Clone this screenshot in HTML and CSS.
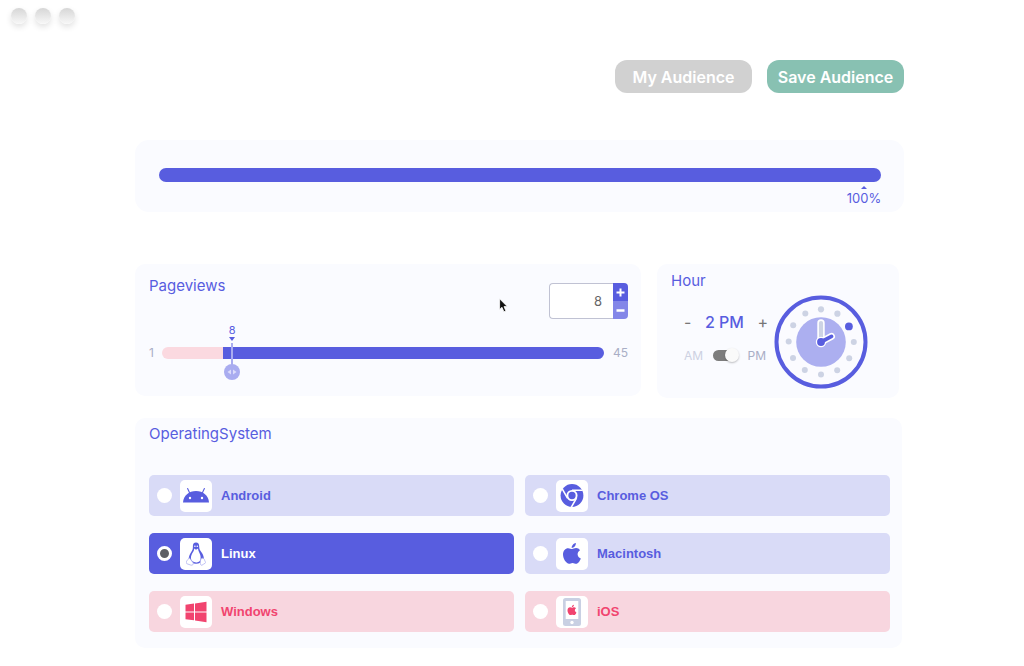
FILE: index.html
```html
<!DOCTYPE html>
<html lang="en">
<head>
    <meta charset="UTF-8">
    <meta name="viewport" content="width=device-width, initial-scale=1.0">
    <title>Audience</title>
    <link rel="stylesheet" href="styles.css">
</head>
<body>
    <div class="window-dots">
        <span></span>
        <span></span>
        <span></span>
    </div>

    <main class="page">
        <div class="actions">
            <button class="btn btn-grey" type="button">My Audience</button>
            <button class="btn btn-green" type="button">Save Audience</button>
        </div>

        <section class="card total">
            <div class="total-bar"></div>
            <div class="total-value">
                <span class="caret-up"></span>
                100%
            </div>
        </section>

        <div class="row">
            <section class="card pageviews">
                <div class="pageviews-head">
                    <h2>Pageviews</h2>
                    <div class="stepper">
                        <input type="text" id="views" value="8" aria-label="Pageviews">
                        <div class="stepper-buttons">
                            <button type="button" onclick="changeViews(1)" aria-label="More">
                                <svg width="9" height="9" viewBox="0 0 9 9"><path d="M4.5 0.5v8M0.5 4.5h8" stroke="#fff" stroke-width="2"/></svg>
                            </button>
                            <button type="button" class="minus" onclick="changeViews(-1)" aria-label="Less">
                                <svg width="9" height="9" viewBox="0 0 9 9"><path d="M0.5 4.5h8" stroke="#fff" stroke-width="2.4"/></svg>
                            </button>
                        </div>
                    </div>
                </div>
                <div class="slider">
                    <span class="limit">1</span>
                    <div class="track">
                        <div class="track-off" id="trackOff" style="width: 13.8%"></div>
                        <div class="track-on"></div>
                        <input type="range" id="range" min="1" max="45" value="8" aria-label="Pageviews range">
                        <div class="marker" id="marker" style="left: 15.9%">
                            <span class="marker-value" id="markerValue">8</span>
                            <span class="caret-down"></span>
                            <span class="marker-line"></span>
                            <svg width="10" height="6" viewBox="0 0 10 6"><path d="M4 0.5v5L0.5 3zM6 0.5v5L9.5 3z" fill="#dcdcfb"/></svg>
                        </div>
                    </div>
                    <span class="limit limit-max">45</span>
                </div>
            </section>

            <section class="card hour">
                <h2>Hour</h2>
                <div class="hour-value">
                    <button type="button" aria-label="Earlier">-</button>
                    <span>2 PM</span>
                    <button type="button" aria-label="Later">+</button>
                </div>
                <div class="ampm">
                    <label class="am" for="ampm">AM</label>
                    <input type="checkbox" id="ampm" checked>
                    <label for="ampm">PM</label>
                </div>
                <svg class="clock" viewBox="0 0 94 94">
                    <circle cx="47" cy="47" r="44.5" fill="#fbfbff" stroke="#585ddf" stroke-width="4"/>
                    <circle cx="47" cy="47" r="24.8" fill="#acaff0"/>
                    <g fill="#cdd3e4">
                        <circle cx="47" cy="14.3" r="3.1"/>
                        <circle cx="63.4" cy="18.7" r="3.1"/>
                        <circle cx="79.8" cy="47" r="3"/>
                        <circle cx="75.2" cy="63.2" r="3"/>
                        <circle cx="63.2" cy="75.2" r="3"/>
                        <circle cx="47" cy="79.5" r="3"/>
                        <circle cx="30.8" cy="75" r="3"/>
                        <circle cx="19" cy="63" r="3"/>
                        <circle cx="14.7" cy="46.5" r="3"/>
                        <circle cx="19.2" cy="30.2" r="3"/>
                        <circle cx="31.3" cy="18.4" r="3"/>
                    </g>
                    <circle cx="74.9" cy="31.4" r="3.9" fill="#585ddf"/>
                    <g fill="none" stroke-linecap="round">
                        <path d="M47 47V28" stroke="#fff" stroke-width="7.4"/>
                        <path d="M47 47V28" stroke="#cdd3e4" stroke-width="4.2"/>
                        <path d="M47 47l10.5-5.6" stroke="#fff" stroke-width="7"/>
                    </g>
                    <circle cx="47" cy="47" r="5.2" fill="#fff"/>
                    <path d="M47 47l10.5-5.6" stroke="#585ddf" stroke-width="3.8" stroke-linecap="round"/>
                    <circle cx="47" cy="47" r="3.9" fill="#585ddf"/>
                </svg>
            </section>
        </div>

        <section class="card systems">
            <h2>OperatingSystem</h2>
            <div class="systems-list">
                <label class="system">
                    <input type="radio" name="os">
                    <span class="icon">
                        <svg width="26" height="16" viewBox="0 0 26 16">
                            <path d="M0 14.500C.4 7.500 6 2.900 13 2.900S25.600 7.500 26 14.500z" fill="#585ddf"/>
                            <path d="M6.700 5.100L4.600 .6M19.300 5.100L21.400 .6" stroke="#585ddf" stroke-width="1.100" stroke-linecap="round"/>
                            <circle cx="7" cy="10" r="1.200" fill="#fff"/>
                            <circle cx="19" cy="10" r="1.200" fill="#fff"/>
                        </svg>
                    </span>
                    Android
                </label>
                <label class="system">
                    <input type="radio" name="os">
                    <span class="icon">
                        <svg width="24" height="24" viewBox="0 0 24 24">
                            <circle cx="12" cy="11.500" r="11.400" fill="#585ddf"/>
                            <path d="M12 6.300h10.600M7.500 14.100L2.200 4.900M16.500 14.100L11.200 23.300" stroke="#fff" stroke-width="1.600"/>
                            <circle cx="12" cy="11.500" r="4.600" fill="#585ddf" stroke="#fff" stroke-width="1.900"/>
                        </svg>
                    </span>
                    Chrome OS
                </label>
                <label class="system selected">
                    <input type="radio" name="os" checked>
                    <span class="icon">
                        <svg width="20" height="24" viewBox="0 0 20 24">
                            <path d="M10 .5C7.800 .5 6.800 2 6.900 4.200c.1 2.800-.4 3.800-1.800 6C3.800 12.200 2.900 14 2.700 16.800L4 18.500c1 1.700 2.500 3.200 6 3.200s5.200-1.200 6-3.200l1.900-1.500c0-3-1.300-5.200-2.800-7.300-1.600-2.100-1.900-3.200-1.900-5.500C13.200 2 12.200 .5 10 .5z" fill="#585ddf"/>
                            <path d="M8.300 6.600L10 7.800l2-1.200c.2 2.400 1.500 4 2.200 6.200.7 2.200.7 4.700-.5 6.200-1.900 2-5.400 1.900-7.400.1-1.700-1.700-1.700-4-.7-6.300 1-2.300 2.500-3.700 2.700-6.200z" fill="#fff"/>
                            <circle cx="8.900" cy="4.300" r=".8" fill="#fff"/>
                            <circle cx="11.300" cy="4.300" r=".8" fill="#fff"/>
                            <path d="M3.200 15.800l3.900 4.900c.8 1.700-.7 2.900-2.300 2.400L.8 21.700c-.7-.4-.3-1.500-.3-2.300 0-1.400 1.700-.9 2.700-3.600zM16.700 16.200c-1.600 0-2.200 1.200-2.300 3.300-.2 2.600 0 4 1.600 3.700 1.200-.5 2-1.600 3.400-2.200.9-.7-.2-1.300-.5-2-.4-1-.4-2.500-2.200-2.800z" fill="#fff" stroke="#aeb1f0" stroke-width=".8"/>
                        </svg>
                    </span>
                    Linux
                </label>
                <label class="system">
                    <input type="radio" name="os">
                    <span class="icon">
                        <svg width="18" height="21" viewBox="0 0 18 21">
                            <path d="M12.900 0c.1 2.500-1.900 4.900-4.200 4.900C8.500 2.600 10.700.2 12.900 0zM9.200 6.100c1 0 2-1 3.900-1 1.600 0 3 .8 3.900 2.100-3.600 2.200-2.900 6.900.8 8.200-.8 2.300-2.600 5.200-4.700 5.300-1.400 0-1.900-.8-3.500-.8-1.700 0-2.200.8-3.500.8C3.200 20.700 0 15.600 0 11.500 0 7.500 2.500 5.200 5.100 5.200c1.700 0 2.900.9 4.100.9z" fill="#585ddf"/>
                        </svg>
                    </span>
                    Macintosh
                </label>
                <label class="system pink">
                    <input type="radio" name="os">
                    <span class="icon">
                        <svg width="22" height="22" viewBox="0 0 22 22">
                            <path d="M.5 3.800L9 2.600v7.900H.5zM10 2.400L21.500 .7v9.800H10zM.5 11.500H9v7.800L.5 18.200zM10 11.500h11.500v9.800L10 19.500z" fill="#f1446f"/>
                        </svg>
                    </span>
                    Windows
                </label>
                <label class="system pink">
                    <input type="radio" name="os">
                    <span class="icon">
                        <svg width="18" height="28" viewBox="0 0 18 28">
                            <rect width="18" height="28" rx="2.500" fill="#c9d0e3"/>
                            <rect x="2.700" y="3" width="12.600" height="18" fill="#fff"/>
                            <circle cx="9" cy="24.500" r="1.700" fill="#fff"/>
                            <path transform="translate(4.500 6.700) scale(.5)" d="M12.900 0c.1 2.500-1.900 4.900-4.200 4.900C8.500 2.600 10.700.2 12.900 0zM9.200 6.100c1 0 2-1 3.900-1 1.600 0 3 .8 3.900 2.100-3.600 2.200-2.900 6.900.8 8.200-.8 2.300-2.600 5.200-4.700 5.300-1.400 0-1.900-.8-3.500-.8-1.700 0-2.200.8-3.500.8C3.200 20.700 0 15.600 0 11.500 0 7.500 2.500 5.200 5.100 5.200c1.700 0 2.900.9 4.100.9z" fill="#f1446f"/>
                        </svg>
                    </span>
                    iOS
                </label>
            </div>
        </section>
    </main>

    <svg class="pointer" width="10" height="15" viewBox="0 0 10 15">
        <path d="M.6 .8v10.700l2.400-2.200 1.900 4.500 2-.9L5 8.600h3.300z" fill="#111" stroke="#fff" stroke-width=".8"/>
    </svg>

    <script>
        const range = document.getElementById('range');
        const views = document.getElementById('views');

        function showViews() {
            const left = (range.value - 1) / 44 * 100;
            views.value = range.value;
            document.getElementById('markerValue').textContent = range.value;
            document.getElementById('marker').style.left = left + '%';
            document.getElementById('trackOff').style.width = Math.max(left - 2.1, 0) + '%';
        }

        function changeViews(step) {
            range.value = Number(range.value) + step;
            showViews();
        }

        range.addEventListener('input', showViews);
        views.addEventListener('change', function () {
            range.value = views.value;
            showViews();
        });

        document.querySelectorAll('.system input').forEach(input => {
            input.addEventListener('change', function () {
                document.querySelector('.system.selected').classList.remove('selected');
                input.parentNode.classList.add('selected');
            });
        });
    </script>
</body>
</html>
```
FILE: styles.css
```css
* {
    box-sizing: border-box;
}

body {
    margin: 0;
    background: #fff;
    font-family: Inter, sans-serif;
    color: #585ddf;
}

button {
    padding: 0;
    border: none;
    font-family: inherit;
    cursor: pointer;
}

h2 {
    margin: 0;
    font-size: 15px;
    line-height: 20px;
    font-weight: 400;
}

.window-dots {
    display: flex;
    gap: 8px;
    padding: 8px 11px;
    height: 32px;
}

.window-dots span {
    width: 16px;
    height: 16px;
    border-radius: 50%;
    background: linear-gradient(#d6d6d6, #f8f8f8);
    box-shadow: 0 3px 6px rgba(0, 0, 0, 0.12);
}

.page {
    padding: 28px 120px 18px 135px;
}

.actions {
    display: flex;
    justify-content: flex-end;
    gap: 15px;
    margin-bottom: 47px;
}

.btn {
    width: 137px;
    height: 33px;
    border-radius: 12px;
    color: #fff;
    font-size: 16px;
    font-weight: 600;
}

.btn-grey {
    background: #d1d1d1;
}

.btn-green {
    background: #88c1b2;
}

.card {
    border-radius: 10px;
    background: #fafbff;
}

/* total */
.total {
    padding: 28px 23px 5px 24px;
    margin-bottom: 52px;
    border-radius: 14px;
}

.total-bar {
    height: 14px;
    border-radius: 7px;
    background: #585ddf;
}

.total-value {
    display: flex;
    flex-direction: column;
    align-items: center;
    width: 34px;
    margin: 4px 0 0 auto;
    font-size: 13px;
    line-height: 18px;
}

.caret-up {
    border: 3px solid transparent;
    border-top: none;
    border-bottom-color: #585ddf;
}

.row {
    display: grid;
    grid-template-columns: 1fr 242px;
    align-items: start;
    gap: 16px;
    margin: 0 5px 20px 0;
}

/* pageviews */
.pageviews {
    padding: 12px 13px 37px 14px;
}

.pageviews-head {
    display: flex;
    justify-content: space-between;
}

.stepper {
    display: flex;
    height: 36px;
    margin-top: 7px;
}

.stepper input {
    width: 64px;
    padding: 0 11px;
    border: 1px solid #c0c2d3;
    border-right: none;
    border-radius: 4px 0 0 4px;
    background: #fff;
    font-family: inherit;
    font-size: 13px;
    color: #666;
    text-align: right;
}

.stepper-buttons {
    display: grid;
    width: 15px;
    border-radius: 0 4px 4px 0;
    overflow: hidden;
}

.stepper-buttons button {
    display: flex;
    align-items: center;
    justify-content: center;
    background: #585ddf;
}

.stepper-buttons .minus {
    background: #8386e8;
}

.slider {
    display: grid;
    grid-template-columns: 13px 1fr 24px;
    grid-template-rows: 12px;
    align-items: center;
    margin-top: 28px;
}

.limit {
    font-size: 12px;
    line-height: 12px;
    color: #a9aec6;
}

.limit-max {
    text-align: right;
}

.track {
    position: relative;
    display: flex;
    height: 12px;
}

.track-off {
    border-radius: 6px 0 0 6px;
    background: #fbd9e0;
}

.track-on {
    flex: 1;
    border-radius: 0 6px 6px 0;
    background: #585ddf;
}

.track input {
    position: absolute;
    top: 17px;
    left: -8px;
    width: calc(100% + 16px);
    height: 16px;
    margin: 0;
    appearance: none;
    background: none;
    cursor: pointer;
}

.track input::-webkit-slider-thumb {
    appearance: none;
    width: 16px;
    height: 16px;
    border-radius: 50%;
    background: #a9acf0;
}

.marker {
    position: absolute;
    top: -24px;
    display: flex;
    flex-direction: column;
    align-items: center;
    width: 16px;
    margin-left: -8px;
    pointer-events: none;
}

.marker-value {
    font-size: 11px;
    line-height: 14px;
}

.caret-down {
    border: 3px solid transparent;
    border-top: 4px solid #585ddf;
    border-bottom: none;
}

.marker-line {
    width: 2px;
    height: 22px;
    margin: 2px 0 4px;
    background: #a9acf0;
}

/* hour */
.hour {
    display: grid;
    grid-template-columns: 1fr 94px;
    grid-template-rows: 26px 22px 1fr;
    row-gap: 14px;
    height: 134px;
    padding: 7px 31px 9px 14px;
}

.hour-value,
.ampm {
    grid-column: 1;
    display: flex;
    align-items: center;
    align-self: start;
    justify-content: space-between;
    height: 22px;
    padding: 0 6px 0 13px;
}

.hour-value {
    font-size: 16px;
    font-weight: 500;
}

.hour-value button {
    background: none;
    font-size: 16px;
    color: #777;
}

.ampm {
    height: 16px;
    padding-right: 8px;
    font-size: 12px;
    color: #a9aec6;
}

.ampm .am {
    color: #cdd1e2;
}

.ampm input {
    position: relative;
    width: 24px;
    height: 11px;
    margin: 0;
    appearance: none;
    border-radius: 6px;
    background: #7d7d7d;
    cursor: pointer;
}

.ampm input::before {
    content: "";
    position: absolute;
    top: -2px;
    left: -2px;
    width: 14px;
    height: 14px;
    border-radius: 50%;
    background: #fafafa;
    box-shadow: 0 1px 2px rgba(0, 0, 0, 0.25);
}

.ampm input:checked::before {
    left: 12px;
}

.clock {
    grid-column: 2;
    grid-row: 1 / 4;
    align-self: end;
    width: 94px;
    height: 94px;
}

/* operating systems */
.systems {
    margin-right: 2px;
    padding: 6px 12px 16px 14px;
}

.systems-list {
    display: grid;
    grid-template-columns: 1fr 1fr;
    gap: 17px 11px;
    margin-top: 31px;
}

.system {
    display: flex;
    align-items: center;
    height: 41px;
    padding-left: 8px;
    border-radius: 5px;
    background: #d9dbf7;
    font-family: "Liberation Sans", Arial, sans-serif;
    font-size: 13px;
    font-weight: 700;
    cursor: pointer;
}

.system input {
    width: 15px;
    height: 15px;
    margin: 0 8px 0 0;
    appearance: none;
    border-radius: 50%;
    background: #fff;
}

.system input:checked {
    border: 3px solid #fff;
    background: #5d5f66;
}

.system .icon {
    display: flex;
    align-items: center;
    justify-content: center;
    width: 32px;
    height: 32px;
    margin-right: 9px;
    border-radius: 5px;
    background: #fff;
}

.system.selected {
    background: #585ddf;
    color: #fff;
}

.system.pink {
    background: #f8d6df;
    color: #f1446f;
}

.pointer {
    position: absolute;
    top: 298px;
    left: 499px;
}
```
